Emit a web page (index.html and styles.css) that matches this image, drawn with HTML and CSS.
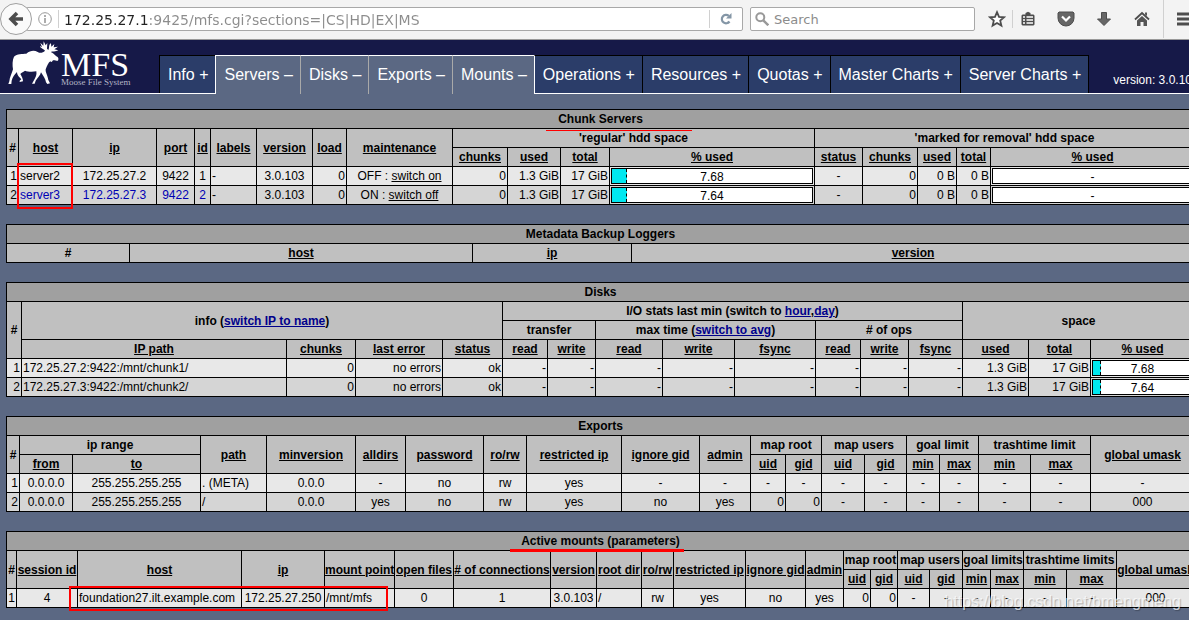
FILE: index.html
```html
<!DOCTYPE html>
<html lang="en">
<head>
<meta charset="utf-8">
<title>MFS Info</title>
<link rel="stylesheet" href="styles.css">
</head>
<body>
<div class="toolbar">
  <button class="back" aria-label="Back"><svg width="16" height="16" viewBox="0 0 16 16"><path d="M9 2 3 8l6 6M3.500 8H15" fill="none" stroke="#4d4d4d" stroke-width="3.600"/></svg></button>
  <div class="field url">
    <svg class="info" width="14" height="14" viewBox="0 0 14 14"><circle cx="7" cy="7" r="6.300" fill="none" stroke="#999"/><path d="M7 3v2M7 6v5" stroke="#999" stroke-width="1.600"/></svg>
    <span class="rule"></span>
    <input class="url-text" type="text" aria-label="Address" value="172.25.27.1:9425/mfs.cgi?sections=|CS|HD|EX|MS">
    <span class="rule"></span>
    <button class="reload" aria-label="Reload"><svg width="12" height="12" viewBox="0 0 12 12"><path d="M9.500 8.500A4.200 4.200 0 1 1 8.800 2.900" fill="none" stroke="#8496a6" stroke-width="2.200"/><path d="M11.500 0v5.600H6z" fill="#8496a6"/></svg></button>
  </div>
  <div class="field search">
    <svg width="14" height="14" viewBox="0 0 14 14"><circle cx="5.300" cy="5.300" r="4" fill="none" stroke="#999" stroke-width="2"/><path d="m8.300 8.300 5 5" stroke="#999" stroke-width="2.400"/></svg>
    <input type="text" aria-label="Search" placeholder="Search">
  </div>
  <div class="tools">
    <button aria-label="Bookmark"><svg width="18" height="18" viewBox="0 0 18 18"><path d="m9 2.200 2 4.700 5 .4-3.800 3.300 1.200 5L9 13l-4.400 2.600 1.200-5L2 7.300l5-.4z" fill="#fff" stroke="#4d4d4d" stroke-width="1.800"/></svg></button>
    <span class="rule"></span>
    <button aria-label="Bookmarks list"><svg width="16" height="16" viewBox="0 0 16 16"><path d="M2.500 3.500h3V2L8 .8 10.500 2v1.500h3l1 1v9l-1 1h-11l-1-1v-9z" fill="#4d4d4d"/><path d="M3 6h2M3 9h2M3 12h2M6.500 6H13M6.500 9H13M6.500 12H13" stroke="#fff" stroke-width="1.600"/></svg></button>
    <button aria-label="Pocket"><svg width="18" height="16" viewBox="0 0 18 16"><path d="M2 1h14l1 1v5a8 8 0 0 1-16 0V2z" fill="#666" stroke="#4d4d4d"/><path d="m5 5.500 4 4 4-4" fill="none" stroke="#fff" stroke-width="2.200"/></svg></button>
    <button aria-label="Downloads"><svg width="16" height="16" viewBox="0 0 16 16"><path d="M5.500 1.500h5V8h4L8 14.500 1.500 8h4z" fill="#666" stroke="#4d4d4d"/></svg></button>
    <button aria-label="Home"><svg width="16" height="16" viewBox="0 0 16 16"><path d="M1 8.500 8 2l7 6.500" fill="none" stroke="#4d4d4d" stroke-width="1.800"/><path d="M3 9.500 8 5l5 4.500V15h-3.500v-4h-3v4H3zM11 1.500h2V5l-2-1.500z" fill="#555"/></svg></button>
    <span class="rule tall"></span>
    <button class="menu" aria-label="Menu"><svg width="18" height="14" viewBox="0 0 18 14"><path d="M0 2h18M0 7h18M0 12h18" stroke="#4d4d4d" stroke-width="3"/></svg></button>
  </div>
</div>

<header class="header">
  <a class="logo" href="#">
    <svg width="54" height="46" viewBox="22 16 162 138"><path fill="#fff" d="M43 66C52 57 68 58 80 57 92 47 104 46 114 52c8 5 16 2 22-4-4-6-14-6-15-14l6 4-5-14 9 9 1-13 6 12 5-7-1 17 4 4c4-8 0-16 8-20l1 10 9-8-2 10 13-2-11 8 12 3c-8 5-18 3-23 5 7 2 11 8 17 13 6 3 8 7 5 13-3 2-9-2-15-1-2 3-4 7-8 3-6 4-10 14-14 24-1 10 6 18 8 32l5 10-8 2-4-5c-1-11-9-19-15-30-2 9-10 17-16 25l-3 9h-8l5-9c6-10 10-18 8-28-10 2-26 2-34-2-6 4-12 6-14 10 4 8 8 12 8 22l-10 2v-4l5-4c-5-6-13-12-13-22-6 6-14 16-16 26l-1 10h-9l3-8c1-12 7-22 11-36-2-12-2-28 3-38z"/></svg>
    <span class="brand"><span class="name">MFS</span><span class="tagline">Moose File System</span></span>
  </a>
  <nav class="tabs">
    <a href="#">Info +</a>
    <a class="on first" href="#">Servers –</a>
    <a class="on" href="#">Disks –</a>
    <a class="on" href="#">Exports –</a>
    <a class="on" href="#">Mounts –</a>
    <a href="#">Operations +</a>
    <a href="#">Resources +</a>
    <a href="#">Quotas +</a>
    <a href="#">Master Charts +</a>
    <a href="#">Server Charts +</a>
  </nav>
  <span class="version">version: 3.0.103</span>
</header>

<main class="main">
<table class="grid servers">
  <colgroup><col><col><col><col><col><col><col><col><col><col><col><col><col><col><col><col><col><col></colgroup>
  <thead>
    <tr><th class="title" colspan="18">Chunk Servers</th></tr>
    <tr><th rowspan="2">#</th><th rowspan="2"><a href="#">host</a></th><th rowspan="2"><a href="#">ip</a></th><th rowspan="2"><a href="#">port</a></th><th rowspan="2"><a href="#">id</a></th><th rowspan="2"><a href="#">labels</a></th><th rowspan="2"><a href="#">version</a></th><th rowspan="2"><a href="#">load</a></th><th rowspan="2"><a href="#">maintenance</a></th><th colspan="4">'regular' hdd space</th><th colspan="5">'marked for removal' hdd space</th></tr>
    <tr><th><a href="#">chunks</a></th><th><a href="#">used</a></th><th><a href="#">total</a></th><th><a href="#">% used</a></th><th><a href="#">status</a></th><th><a href="#">chunks</a></th><th><a href="#">used</a></th><th><a href="#">total</a></th><th><a href="#">% used</a></th></tr>
  </thead>
  <tbody>
    <tr><td class="r">1</td><td class="l">server2</td><td>172.25.27.2</td><td>9422</td><td>1</td><td class="l">-</td><td>3.0.103</td><td class="r">0</td><td>OFF : <a href="#">switch on</a></td><td class="r">0</td><td class="r">1.3 GiB</td><td class="r">17 GiB</td><td><div class="bar"><span class="fill" style="width:7.68%"></span><span class="value">7.68</span></div></td><td>-</td><td class="r">0</td><td class="r">0 B</td><td class="r">0 B</td><td><div class="bar"><span class="value">-</span></div></td></tr>
    <tr><td class="r">2</td><td class="l blue">server3</td><td class="blue">172.25.27.3</td><td class="blue">9422</td><td class="blue">2</td><td class="l">-</td><td>3.0.103</td><td class="r">0</td><td>ON : <a href="#">switch off</a></td><td class="r">0</td><td class="r">1.3 GiB</td><td class="r">17 GiB</td><td><div class="bar"><span class="fill" style="width:7.64%"></span><span class="value">7.64</span></div></td><td>-</td><td class="r">0</td><td class="r">0 B</td><td class="r">0 B</td><td><div class="bar"><span class="value">-</span></div></td></tr>
  </tbody>
</table>

<table class="grid loggers">
  <colgroup><col><col><col><col></colgroup>
  <thead>
    <tr><th class="title" colspan="4">Metadata Backup Loggers</th></tr>
    <tr><th>#</th><th><a href="#">host</a></th><th><a href="#">ip</a></th><th><a href="#">version</a></th></tr>
  </thead>
</table>

<table class="grid disks">
  <colgroup><col><col><col><col><col><col><col><col><col><col><col><col><col><col><col><col></colgroup>
  <thead>
    <tr><th class="title" colspan="16">Disks</th></tr>
    <tr><th rowspan="3">#</th><th colspan="4" rowspan="2">info (<a class="blue" href="#">switch IP to name</a>)</th><th colspan="8">I/O stats last min (switch to <a class="blue" href="#">hour</a>,<a class="blue" href="#">day</a>)</th><th colspan="3" rowspan="2">space</th></tr>
    <tr><th colspan="2">transfer</th><th colspan="3">max time (<a class="blue" href="#">switch to avg</a>)</th><th colspan="3"># of ops</th></tr>
    <tr><th><a href="#">IP path</a></th><th><a href="#">chunks</a></th><th><a href="#">last error</a></th><th><a href="#">status</a></th><th><a href="#">read</a></th><th><a href="#">write</a></th><th><a href="#">read</a></th><th><a href="#">write</a></th><th><a href="#">fsync</a></th><th><a href="#">read</a></th><th><a href="#">write</a></th><th><a href="#">fsync</a></th><th><a href="#">used</a></th><th><a href="#">total</a></th><th><a href="#">% used</a></th></tr>
  </thead>
  <tbody>
    <tr><td class="r">1</td><td class="l">172.25.27.2:9422:/mnt/chunk1/</td><td class="r">0</td><td class="r">no errors</td><td class="r">ok</td><td class="r">-</td><td class="r">-</td><td class="r">-</td><td class="r">-</td><td class="r">-</td><td class="r">-</td><td class="r">-</td><td class="r">-</td><td class="r">1.3 GiB</td><td class="r">17 GiB</td><td><div class="bar"><span class="fill" style="width:7.68%"></span><span class="value">7.68</span></div></td></tr>
    <tr><td class="r">2</td><td class="l">172.25.27.3:9422:/mnt/chunk2/</td><td class="r">0</td><td class="r">no errors</td><td class="r">ok</td><td class="r">-</td><td class="r">-</td><td class="r">-</td><td class="r">-</td><td class="r">-</td><td class="r">-</td><td class="r">-</td><td class="r">-</td><td class="r">1.3 GiB</td><td class="r">17 GiB</td><td><div class="bar"><span class="fill" style="width:7.64%"></span><span class="value">7.64</span></div></td></tr>
  </tbody>
</table>

<table class="grid exports">
  <colgroup><col><col><col><col><col><col><col><col><col><col><col><col><col><col><col><col><col><col><col><col></colgroup>
  <thead>
    <tr><th class="title" colspan="20">Exports</th></tr>
    <tr><th rowspan="2">#</th><th colspan="2">ip range</th><th rowspan="2"><a href="#">path</a></th><th rowspan="2"><a href="#">minversion</a></th><th rowspan="2"><a href="#">alldirs</a></th><th rowspan="2"><a href="#">password</a></th><th rowspan="2"><a href="#">ro/rw</a></th><th rowspan="2"><a href="#">restricted ip</a></th><th rowspan="2"><a href="#">ignore gid</a></th><th rowspan="2"><a href="#">admin</a></th><th colspan="2">map root</th><th colspan="2">map users</th><th colspan="2">goal limit</th><th colspan="2">trashtime limit</th><th rowspan="2"><a href="#">global umask</a></th></tr>
    <tr><th><a href="#">from</a></th><th><a href="#">to</a></th><th><a href="#">uid</a></th><th><a href="#">gid</a></th><th><a href="#">uid</a></th><th><a href="#">gid</a></th><th><a href="#">min</a></th><th><a href="#">max</a></th><th><a href="#">min</a></th><th><a href="#">max</a></th></tr>
  </thead>
  <tbody>
    <tr><td class="r">1</td><td>0.0.0.0</td><td>255.255.255.255</td><td class="l">. (META)</td><td>0.0.0</td><td>-</td><td>no</td><td>rw</td><td>yes</td><td>-</td><td>-</td><td>-</td><td>-</td><td>-</td><td>-</td><td>-</td><td>-</td><td>-</td><td>-</td><td>-</td></tr>
    <tr><td class="r">2</td><td>0.0.0.0</td><td>255.255.255.255</td><td class="l">/</td><td>0.0.0</td><td>yes</td><td>no</td><td>rw</td><td>yes</td><td>no</td><td>yes</td><td class="r">0</td><td class="r">0</td><td>-</td><td>-</td><td>-</td><td>-</td><td>-</td><td>-</td><td>000</td></tr>
  </tbody>
</table>

<table class="grid mounts">
  <colgroup><col><col><col><col><col><col><col><col><col><col><col><col><col><col><col><col><col><col><col><col><col><col></colgroup>
  <thead>
    <tr><th class="title" colspan="22">Active mounts (parameters)</th></tr>
    <tr><th rowspan="2">#</th><th rowspan="2"><a href="#">session id</a></th><th rowspan="2"><a href="#">host</a></th><th rowspan="2"><a href="#">ip</a></th><th rowspan="2"><a href="#">mount point</a></th><th rowspan="2"><a href="#">open files</a></th><th rowspan="2"><a href="#"># of connections</a></th><th rowspan="2"><a href="#">version</a></th><th rowspan="2"><a href="#">root dir</a></th><th rowspan="2"><a href="#">ro/rw</a></th><th rowspan="2"><a href="#">restricted ip</a></th><th rowspan="2"><a href="#">ignore gid</a></th><th rowspan="2"><a href="#">admin</a></th><th colspan="2">map root</th><th colspan="2">map users</th><th colspan="2">goal limits</th><th colspan="2">trashtime limits</th><th rowspan="2"><a href="#">global umask</a></th></tr>
    <tr><th><a href="#">uid</a></th><th><a href="#">gid</a></th><th><a href="#">uid</a></th><th><a href="#">gid</a></th><th><a href="#">min</a></th><th><a href="#">max</a></th><th><a href="#">min</a></th><th><a href="#">max</a></th></tr>
  </thead>
  <tbody>
    <tr><td class="r">1</td><td>4</td><td class="l">foundation27.ilt.example.com</td><td>172.25.27.250</td><td class="l">/mnt/mfs</td><td>0</td><td>1</td><td>3.0.103</td><td class="l">/</td><td>rw</td><td>yes</td><td>no</td><td>yes</td><td class="r">0</td><td class="r">0</td><td>-</td><td>-</td><td>-</td><td>-</td><td>-</td><td>-</td><td>000</td></tr>
  </tbody>
</table>

<span class="mark box mark-hosts"></span>
<span class="mark box mark-mount"></span>
<span class="mark line mark-servers"></span>
<span class="mark line mark-mounts"></span>
<span class="watermark">https://blog.csdn.net/bmengmeng</span>
</main>
</body>
</html>
```
FILE: styles.css
```css
* { box-sizing: border-box; }

body {
  margin: 0;
  min-height: 100vh;
  overflow-x: hidden;
  background: #5b6883;
  color: #000;
  font: 12px/18px "Liberation Sans", Arial, sans-serif;
}

a { color: inherit; }

button {
  display: flex;
  align-items: center;
  justify-content: center;
  flex: none;
  padding: 0;
  border: 0;
  background: none;
}

/* browser toolbar */
.toolbar {
  display: flex;
  align-items: center;
  height: 40px;
  padding-bottom: 2px;
  overflow: hidden;
  background: #f3f3f3;
  border-bottom: 1px solid #999;
}

.back {
  position: relative;
  width: 32px;
  height: 32px;
  border: 1px solid #a0a0a0;
  border-radius: 50%;
  background: #fafafa;
}

.field {
  display: flex;
  align-items: center;
  height: 24px;
  background: #fff;
  border: 1px solid #a8a8a8;
  border-radius: 2px;
}

.field input {
  flex: 1;
  min-width: 0;
  padding: 2px 0 0;
  border: 0;
  outline: 0;
  background: none;
  font: 13px/20px "DejaVu Sans", sans-serif;
}

.field input::placeholder { color: #8c8c8c; opacity: 1; }

.url {
  flex: 1;
  margin-left: -6px;
  padding-left: 11px;
}

.info { margin-right: 6px; }

.rule {
  flex: none;
  width: 1px;
  height: 18px;
  background: #d0d0d0;
}

.field .url-text {
  margin-left: 5px;
  font-size: 14px;
  color: transparent;
  background: linear-gradient(to right, #222 84px, #8c8c8c 84px);
  -webkit-background-clip: text;
  background-clip: text;
}

.reload { width: 32px; height: 22px; }

.search {
  flex: none;
  width: 225px;
  margin-left: 7px;
  padding-left: 4px;
  gap: 5px;
}

.tools {
  display: flex;
  align-items: center;
  flex: none;
  width: 204px;
  margin-left: 10px;
  gap: 3px;
}

.tools button { width: 24px; height: 24px; }
.tools button + button { margin-left: 11px; }
.tools .tall { height: 38px; margin-left: 6px; }
.tools .menu { width: 18px; margin-left: 10px; }

/* page header */
.header {
  display: flex;
  height: 54px;
  overflow-x: clip;
  background: #161948;
  border-bottom: 1px solid #fff;
  color: #fff;
}

.logo {
  display: flex;
  flex: none;
  width: 159px;
  padding-left: 7px;
  color: #fff;
  text-decoration: none;
}

.brand {
  display: flex;
  flex-direction: column;
  padding-top: 12px;
  font-family: "Liberation Serif", serif;
}

.name { font-size: 34px; line-height: 25px; }
.tagline { font-size: 9px; line-height: 10px; color: #b4b5c6; white-space: nowrap; }

.tabs {
  display: flex;
  flex: none;
  margin-top: 15px;
}

.tabs a {
  padding: 0 7px 0 8px;
  background: #2b3d69;
  border-top: 1px solid #000;
  border-left: 1px solid #000;
  font-size: 16px;
  line-height: 38px;
  color: #fff;
  text-decoration: none;
  white-space: nowrap;
}

.tabs a:last-child { border-right: 1px solid #000; }

.tabs .on {
  margin-bottom: -1px;
  background: #5b6883;
  border-top-color: #fff;
  border-left-color: #a9a9a9;
}

.tabs .first,
.tabs .on + a:not(.on) { border-left-color: #fff; }

.version {
  flex: none;
  margin-left: 24px;
  padding-top: 31px;
  white-space: nowrap;
}

/* data tables */
.main {
  position: relative;
  padding: 15px 0 12px 6px;
  overflow: hidden;
}

.grid {
  width: 100vw;
  margin-bottom: 19px;
  table-layout: fixed;
  border-collapse: collapse;
}

.grid:last-of-type { margin-bottom: 0; }

.grid th,
.grid td {
  padding: 0;
  border: 1px solid #000;
  text-align: center;
  white-space: nowrap;
}

.grid th { background: #c0c0c0; }
.grid .title { background: #a0a0a0; }
.grid td { background: #e8e8e8; }
.grid tr:nth-child(even) td { background: #d5d5d5; }
.grid .l { padding-left: 1px; text-align: left; }
.grid .r { padding-right: 1px; text-align: right; }
.grid td.blue { color: #0000b4; }
.grid a.blue { color: #00008b; }

.bar {
  display: grid;
  height: 16px;
  margin: 1px;
  background: #fff;
  border: 1px solid #000;
  line-height: 16px;
}

.fill,
.value { grid-area: 1 / 1; }

.fill {
  height: 14px;
  background: #00e8f0;
  border-right: 1px dashed #000;
}

.servers col:nth-child(1) { width: 12px; }
.servers col:nth-child(2) { width: 54px; }
.servers col:nth-child(3) { width: 84px; }
.servers col:nth-child(4) { width: 38px; }
.servers col:nth-child(5) { width: 16px; }
.servers col:nth-child(6) { width: 46px; }
.servers col:nth-child(7) { width: 56px; }
.servers col:nth-child(8) { width: 34px; }
.servers col:nth-child(9) { width: 106px; }
.servers col:nth-child(10) { width: 55px; }
.servers col:nth-child(11) { width: 53px; }
.servers col:nth-child(12) { width: 49px; }
.servers col:nth-child(13) { width: 205px; }
.servers col:nth-child(14) { width: 48px; }
.servers col:nth-child(15) { width: 55px; }
.servers col:nth-child(16) { width: 39px; }
.servers col:nth-child(17) { width: 34px; }

.loggers col:nth-child(1) { width: 123px; }
.loggers col:nth-child(2) { width: 343px; }
.loggers col:nth-child(3) { width: 159px; }

.disks col:nth-child(1) { width: 15px; }
.disks col:nth-child(2) { width: 265px; }
.disks col:nth-child(3) { width: 69px; }
.disks col:nth-child(4) { width: 87px; }
.disks col:nth-child(5) { width: 60px; }
.disks col:nth-child(6) { width: 45px; }
.disks col:nth-child(7) { width: 48px; }
.disks col:nth-child(8) { width: 67px; }
.disks col:nth-child(9) { width: 72px; }
.disks col:nth-child(10) { width: 81px; }
.disks col:nth-child(11) { width: 45px; }
.disks col:nth-child(12) { width: 48px; }
.disks col:nth-child(13) { width: 54px; }
.disks col:nth-child(14) { width: 66px; }
.disks col:nth-child(15) { width: 62px; }

.exports col:nth-child(1) { width: 13px; }
.exports col:nth-child(2) { width: 53px; }
.exports col:nth-child(3) { width: 128px; }
.exports col:nth-child(4) { width: 66px; }
.exports col:nth-child(5) { width: 89px; }
.exports col:nth-child(6) { width: 50px; }
.exports col:nth-child(7) { width: 78px; }
.exports col:nth-child(8) { width: 43px; }
.exports col:nth-child(9) { width: 95px; }
.exports col:nth-child(10) { width: 78px; }
.exports col:nth-child(11) { width: 51px; }
.exports col:nth-child(12) { width: 35px; }
.exports col:nth-child(13) { width: 36px; }
.exports col:nth-child(14) { width: 43px; }
.exports col:nth-child(15) { width: 42px; }
.exports col:nth-child(16) { width: 33px; }
.exports col:nth-child(17) { width: 39px; }
.exports col:nth-child(18) { width: 52px; }
.exports col:nth-child(19) { width: 60px; }

.mounts col:nth-child(1) { width: 10px; }
.mounts col:nth-child(2) { width: 61px; }
.mounts col:nth-child(3) { width: 164px; }
.mounts col:nth-child(4) { width: 83px; }
.mounts col:nth-child(5) { width: 70px; }
.mounts col:nth-child(6) { width: 59px; }
.mounts col:nth-child(7) { width: 97px; }
.mounts col:nth-child(8) { width: 46px; }
.mounts col:nth-child(9) { width: 45px; }
.mounts col:nth-child(10) { width: 32px; }
.mounts col:nth-child(11) { width: 72px; }
.mounts col:nth-child(12) { width: 60px; }
.mounts col:nth-child(13) { width: 38px; }
.mounts col:nth-child(14) { width: 27px; }
.mounts col:nth-child(15) { width: 27px; }
.mounts col:nth-child(16) { width: 32px; }
.mounts col:nth-child(17) { width: 33px; }
.mounts col:nth-child(18) { width: 28px; }
.mounts col:nth-child(19) { width: 33px; }
.mounts col:nth-child(20) { width: 43px; }
.mounts col:nth-child(21) { width: 50px; }

/* highlights drawn over the tables */
.mark { position: absolute; pointer-events: none; }
.box { border: 2px solid #f00; }
.line { background: #f00; }
.mark-hosts { left: 17px; top: 69px; width: 56px; height: 46px; }
.mark-mount { left: 69px; top: 492px; width: 319px; height: 25px; }
.mark-servers { left: 546px; top: 36px; width: 146px; height: 1px; }
.mark-mounts { left: 510px; top: 455px; width: 174px; height: 3px; }

.watermark {
  position: absolute;
  right: 8px;
  bottom: 9px;
  font-size: 16px;
  color: rgba(255, 255, 255, 0.7);
  text-shadow: 1px 1px 1px rgba(0, 0, 0, 0.25);
  pointer-events: none;
}
```
